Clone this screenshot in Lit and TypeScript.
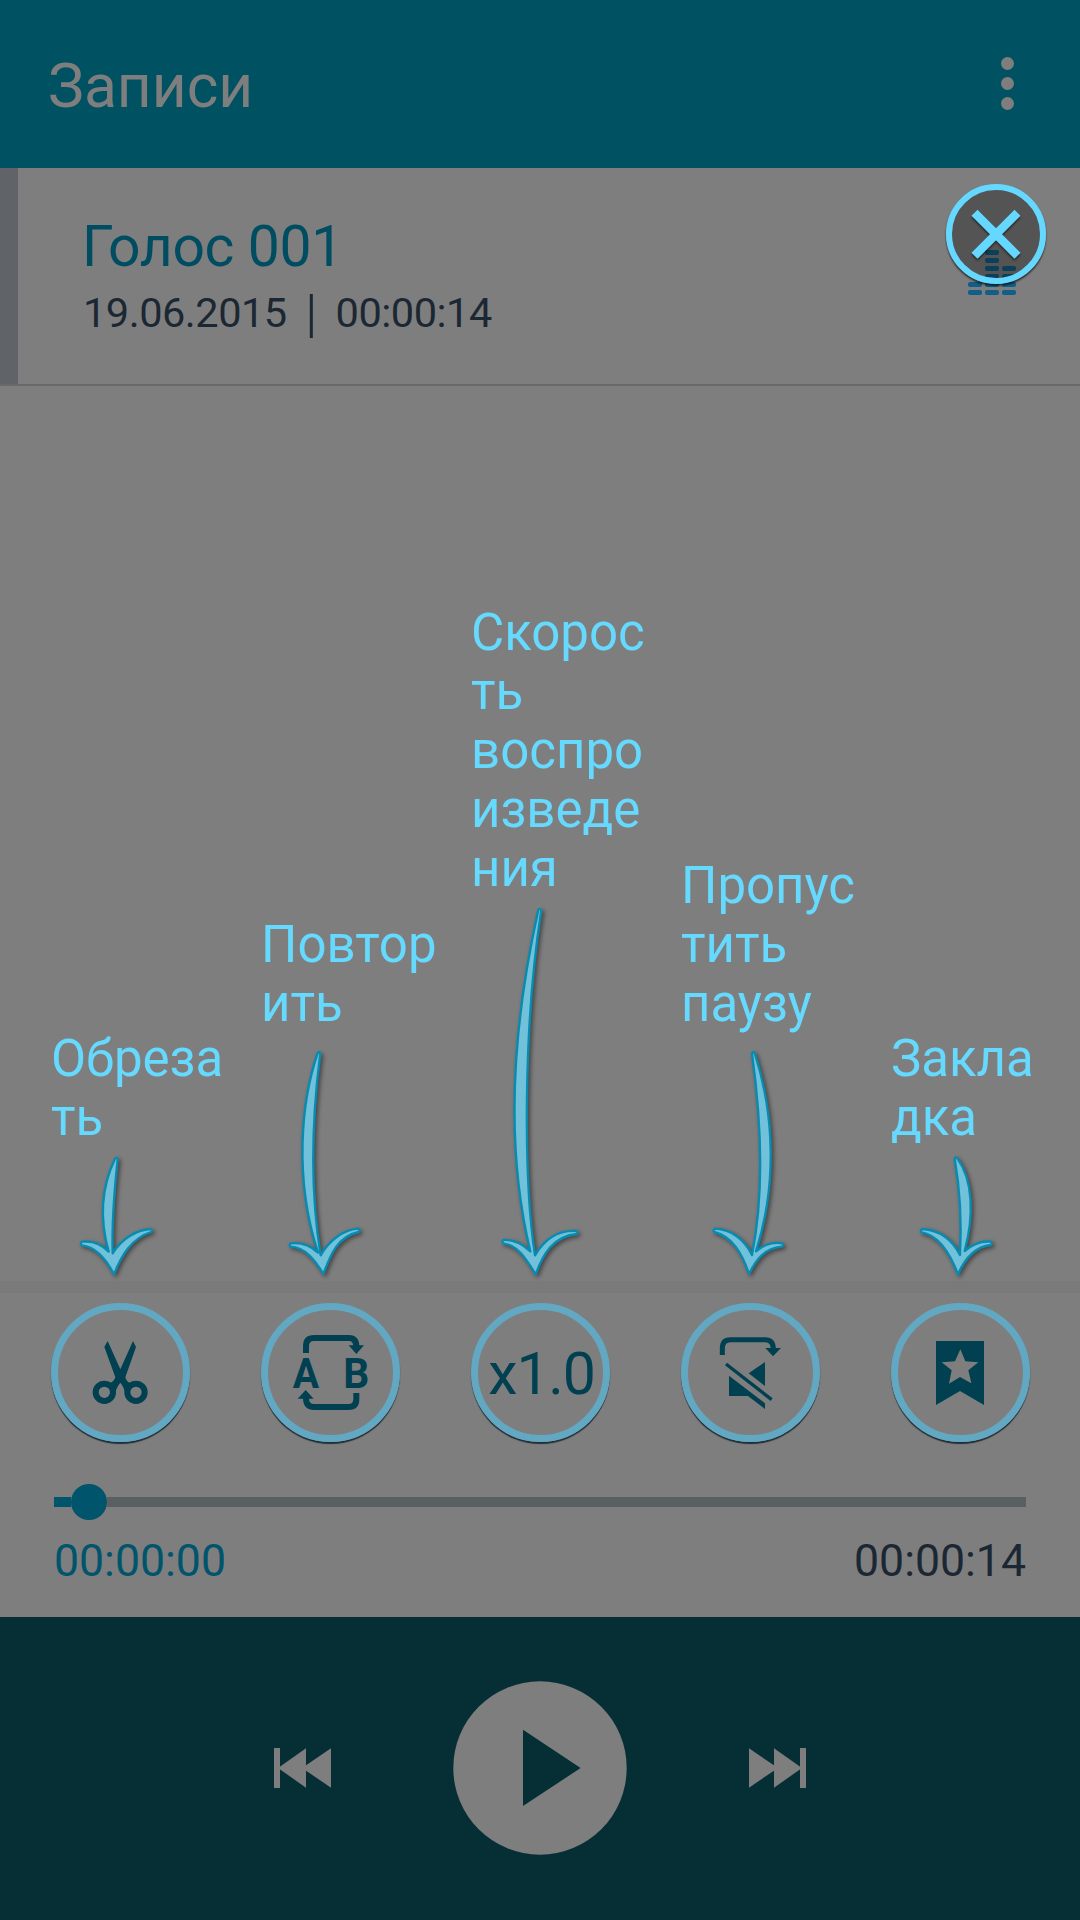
import { LitElement, html, css, svg } from "lit";
import { customElement } from "lit/decorators.js";

interface Hint {
  lines: string[];
  height: number;
  top: number;
  path: string;
}

/* Arrow paths are drawn at three units per pixel. */
const HINTS: Hint[] = [
  {
    lines: ["Обреза", "ть"],
    height: 134,
    top: 381,
    path: "M255 416C222 485 202 575 236 695C215 672 185 662 156 665Q149 670 156 676C195 680 227 715 252 763C275 705 305 655 363 636Q369 630 361 627C320 630 275 655 248 700C246 640 250 540 263 418Q261 410 255 416Z",
  },
  {
    lines: ["Повтор", "ить"],
    height: 248,
    top: 399,
    path: "M233 459C185 600 160 830 234 1058C210 1035 180 1027 152 1030Q146 1036 152 1040C195 1042 225 1080 250 1122C270 1070 290 1010 356 996Q361 989 353 986C310 990 268 1020 242 1066C215 900 210 700 241 460Q237 453 233 459Z",
  },
  {
    lines: ["Скорос", "ть", "воспро", "изведе", "ния"],
    height: 383,
    top: -6,
    path: "M265 30C205 300 151 680 241 1054C215 1030 190 1018 160 1020Q154 1025 160 1030C205 1035 230 1080 257 1123C280 1060 310 1010 379 1002Q385 997 379 993C325 990 285 1015 255 1066C222 850 217 400 274 30Q270 23 265 30Z",
  },
  {
    lines: ["Пропус", "тить", "паузу"],
    height: 248,
    top: 549,
    path: "M276 610C302 800 315 1020 276 1215C255 1170 215 1138 165 1136Q157 1141 163 1146C215 1160 245 1205 267 1272C290 1225 315 1195 365 1190Q373 1185 366 1180C340 1176 310 1185 288 1204C350 1010 345 800 284 609Q280 603 276 610Z",
  },
  {
    lines: ["Закла", "дка"],
    height: 134,
    top: 381,
    path: "M254 416C272 520 275 610 270 705C245 655 205 630 157 627Q149 632 155 637C205 645 240 700 264 763C285 715 315 680 362 675Q368 670 362 665C330 662 305 675 284 693C312 590 310 480 262 415Q257 409 254 416Z",
  },
];

@customElement("app-root")
export class AppRoot extends LitElement {
  static styles = css`
    :host {
      display: block;
      width: 1080px;
      height: 1920px;
      font-family: Roboto, sans-serif;
    }
    .screen {
      position: relative;
      display: flex;
      flex-direction: column;
      width: 1080px;
      height: 1920px;
      overflow: hidden;
      background: #7e7e7e;
    }
    svg {
      display: block;
      overflow: visible;
    }
    .bar {
      height: 168px;
      box-sizing: border-box;
      padding: 0 66px 0 48px;
      display: flex;
      align-items: center;
      justify-content: space-between;
      background: #005263;
      color: #7e7e7e;
    }
    .title {
      font-size: 60.5px;
      line-height: 70px;
      padding-top: 6px;
    }
    .dots {
      display: flex;
      flex-direction: column;
      gap: 7px;
      padding-bottom: 1px;
    }
    .dot {
      width: 13px;
      height: 13px;
      border-radius: 50%;
      background: #7e7e7e;
    }
    .record {
      height: 218px;
      box-sizing: border-box;
      border-bottom: 2px solid #696969;
      display: flex;
      justify-content: space-between;
    }
    .stripe {
      width: 18px;
      background: #606469;
    }
    .info {
      flex: 1;
      padding: 45px 0 0 64px;
    }
    .name {
      font-size: 57px;
      line-height: 68px;
      letter-spacing: -0.35px;
      color: #004c61;
    }
    .meta {
      font-size: 41.5px;
      line-height: 52px;
      letter-spacing: -0.48px;
      color: #1b2733;
      white-space: pre;
      padding: 6px 0 0 1px;
    }
    .divider {
      display: inline-block;
      transform: scaleY(1.27);
    }
    .levels {
      display: flex;
      align-items: flex-end;
      gap: 3px;
      height: 127px;
      padding-right: 64px;
    }
    .level {
      display: flex;
      flex-direction: column;
      gap: 3px;
    }
    .cell {
      width: 14px;
      height: 5px;
      border-radius: 2px;
      background: #115f86;
    }
    .close {
      position: absolute;
      left: 946px;
      top: 184px;
      width: 100px;
      height: 100px;
      box-sizing: border-box;
      border: 6px solid #64d8ff;
      border-radius: 50%;
      background: rgba(0, 0, 0, 0.33);
      box-shadow: 0 2px 2px rgba(0, 0, 0, 0.65);
    }
    .cross {
      filter: drop-shadow(0 2px 1px rgba(0, 0, 0, 0.5));
    }
    .hints {
      flex: 1;
      display: grid;
      grid-template-columns: repeat(5, 139px);
      column-gap: 71px;
      padding-left: 51px;
      align-items: end;
    }
    .label {
      font-size: 51px;
      line-height: 59px;
      color: #66d9ff;
      white-space: nowrap;
    }
    .arrow {
      filter: drop-shadow(2px 2px 2px rgba(0, 0, 0, 0.45));
    }
    .player {
      height: 336px;
      box-sizing: border-box;
      border-top: 12px solid #7a7a7a;
    }
    .tools {
      display: grid;
      grid-template-columns: repeat(5, 139px);
      column-gap: 71px;
      padding: 10px 0 0 51px;
    }
    .tool {
      width: 139px;
      height: 139px;
      box-sizing: border-box;
      border: 7px solid #62a8c2;
      border-radius: 50%;
      box-shadow: 0 2px 1px rgba(10, 25, 35, 0.8);
      display: flex;
      align-items: center;
      justify-content: center;
      color: #004051;
    }
    .icon {
      flex: none;
      fill: #004051;
    }
    .line {
      fill: none;
      stroke: #004051;
    }
    .letter {
      font-family: Roboto, sans-serif;
      font-size: 126px;
      font-weight: 700;
    }
    .speed {
      font-size: 59px;
      line-height: 70px;
      letter-spacing: -1.2px;
      padding: 2px 0 0 2px;
    }
    .slider {
      display: flex;
      align-items: center;
      margin: 42px 54px 0;
      height: 36px;
    }
    .done {
      width: 17px;
      height: 10px;
      background: #00546c;
    }
    .thumb {
      width: 36px;
      height: 36px;
      border-radius: 50%;
      background: #00546c;
    }
    .rest {
      flex: 1;
      height: 10px;
      background: #5a5f62;
    }
    .times {
      display: flex;
      justify-content: space-between;
      padding: 15px 54px 0;
      font-size: 44.6px;
      line-height: 53px;
      color: #1b2733;
    }
    .now {
      color: #00546c;
    }
    .controls {
      height: 303px;
      box-sizing: border-box;
      padding: 0 274px 1px;
      display: flex;
      align-items: center;
      justify-content: space-between;
      background: #052e35;
      fill: #7e7e7e;
    }
    .play {
      fill: #052e35;
    }
  `;

  private hint(h: Hint) {
    return html`<div>
      <div class="label">${h.lines.map((l) => html`<div>${l}</div>`)}</div>
      <svg class="arrow" width="139" height=${h.height} viewBox=${`63 ${h.top} 417 ${h.height * 3}`}>
        <path d=${h.path} fill="#70c1d9" stroke="#078bb1" stroke-width="7" stroke-linejoin="round" />
      </svg>
    </div>`;
  }

  private icon(x: number, y: number, body: unknown) {
    return html`<div class="tool">
      <svg class="icon" width="139" height="139" viewBox=${`${x} ${y} 417 417`}>${body}</svg>
    </div>`;
  }

  render() {
    return html`<div class="screen">
      <header class="bar">
        <div class="title">Записи</div>
        <div class="dots">
          <div class="dot"></div>
          <div class="dot"></div>
          <div class="dot"></div>
        </div>
      </header>
      <section class="record">
        <div class="stripe"></div>
        <div class="info">
          <div class="name">Голос 001</div>
          <div class="meta">19.06.2015  <span class="divider">|</span>  00:00:14</div>
        </div>
        <div class="levels">
          ${[2, 6, 4].map(
            (n) => html`<div class="level">${Array.from({ length: n }, () => html`<div class="cell"></div>`)}</div>`
          )}
        </div>
      </section>
      <main class="hints">${HINTS.map((h) => this.hint(h))}</main>
      <section class="player">
        <div class="tools">
          ${this.icon(33, 39, svg`
            <path d="M203 153L193 171L226 262Q222 275 208 280L222 318Q230 290 241 278Q252 290 258 318L272 280Q259 275 256 262L288 171L279 153L241 238Z"/>
            <circle class="line" cx="193" cy="307" r="26" stroke-width="18"/>
            <circle class="line" cx="288" cy="307" r="26" stroke-width="18"/>`)}
          ${this.icon(693, 99, svg`
            <path class="line" stroke-width="18" d="M828 249V228Q828 204 852 204H957Q979 204 979 230M979 369V388Q979 411 956 411H852Q828 411 828 384"/>
            <path d="M956 226H1002L979 252ZM803 386H851L827 360Z"/>
            <text class="letter" x="788" y="354" textLength="79" lengthAdjust="spacingAndGlyphs">A</text>
            <text class="letter" x="940" y="354" textLength="78" lengthAdjust="spacingAndGlyphs">B</text>`)}
          <div class="tool"><span class="speed">x1.0</span></div>
          ${this.icon(3, 39, svg`
            <path class="line" stroke-width="15" d="M127 195V175Q127 149 151 149H256Q280 149 280 178"/>
            <path d="M256 174H303L279 199ZM206 250L255 216V288ZM147 257L255 340V357L204 318H147Z"/>
            <path class="line" stroke-width="10" d="M138 222L275 329"/>`)}
          ${this.icon(633, 39, svg`
            <path fill-rule="evenodd" d="M768 153H912V345L840 303L768 345ZM841 178L825 214L785 217L815 241L807 281L840 261L874 280L865 241L895 217L856 214Z"/>`)}
        </div>
        <div class="slider">
          <div class="done"></div>
          <div class="thumb"></div>
          <div class="rest"></div>
        </div>
        <div class="times"><span class="now">00:00:00</span><span>00:00:14</span></div>
      </section>
      <footer class="controls">
        <svg width="57" height="40" viewBox="0 0 57 40">
          <path d="M0 0H6V40H0ZM4 20L32 0.3V39.7ZM28 20L57 0.3V39.7Z" />
        </svg>
        <svg width="174" height="174" viewBox="0 0 174 174">
          <circle cx="87" cy="87" r="86.7" />
          <path class="play" d="M70 48.7L127.6 87L70 125Z" />
        </svg>
        <svg width="57" height="40" viewBox="0 0 57 40">
          <path d="M57 0H51V40H57ZM53 20L25 0.3V39.7ZM29 20L0 0.3V39.7Z" />
        </svg>
      </footer>
      <div class="close">
        <svg class="cross" width="88" height="88" viewBox="0 0 88 88">
          <path d="M22.500 22.800L65.500 65.800M65.500 22.800L22.500 65.800" stroke="#64d8ff" stroke-width="8.500" />
        </svg>
      </div>
    </div>`;
  }
}
